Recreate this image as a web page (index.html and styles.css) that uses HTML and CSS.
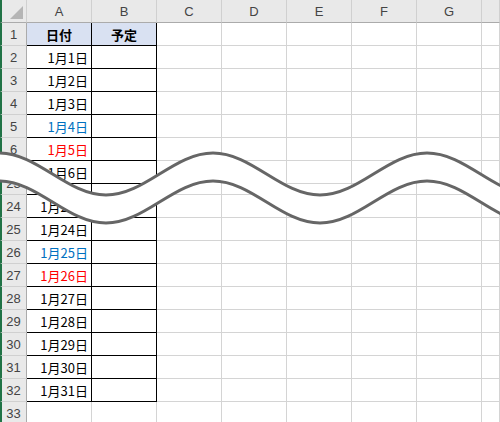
FILE: index.html
```html
<!DOCTYPE html>
<html lang="ja">
<head>
<meta charset="utf-8">
<link rel="stylesheet" href="styles.css">
</head>
<body>
<div class="sheet">
  <div class="part top">
    <div class="row hdrow">
      <div class="corner"><span class="tri"></span></div>
      <div class="ch">A</div><div class="ch">B</div><div class="ch">C</div><div class="ch">D</div><div class="ch">E</div><div class="ch">F</div><div class="ch">G</div><div class="ch"></div>
    </div>
    <div class="row"><div class="rh">1</div><div class="c t th">日付</div><div class="c t th">予定</div><div class="c"></div><div class="c"></div><div class="c"></div><div class="c"></div><div class="c"></div><div class="c"></div></div>
    <div class="row"><div class="rh">2</div><div class="c t r">1月1日</div><div class="c t"></div><div class="c"></div><div class="c"></div><div class="c"></div><div class="c"></div><div class="c"></div><div class="c"></div></div>
    <div class="row"><div class="rh">3</div><div class="c t r">1月2日</div><div class="c t"></div><div class="c"></div><div class="c"></div><div class="c"></div><div class="c"></div><div class="c"></div><div class="c"></div></div>
    <div class="row"><div class="rh">4</div><div class="c t r">1月3日</div><div class="c t"></div><div class="c"></div><div class="c"></div><div class="c"></div><div class="c"></div><div class="c"></div><div class="c"></div></div>
    <div class="row"><div class="rh">5</div><div class="c t r sat">1月4日</div><div class="c t"></div><div class="c"></div><div class="c"></div><div class="c"></div><div class="c"></div><div class="c"></div><div class="c"></div></div>
    <div class="row"><div class="rh">6</div><div class="c t r sun">1月5日</div><div class="c t"></div><div class="c"></div><div class="c"></div><div class="c"></div><div class="c"></div><div class="c"></div><div class="c"></div></div>
    <div class="row"><div class="rh">7</div><div class="c t r">1月6日</div><div class="c t"></div><div class="c"></div><div class="c"></div><div class="c"></div><div class="c"></div><div class="c"></div><div class="c"></div></div>
    <div class="row"><div class="rh">8</div><div class="c t r">1月7日</div><div class="c t"></div><div class="c"></div><div class="c"></div><div class="c"></div><div class="c"></div><div class="c"></div><div class="c"></div></div>
  </div>
  <div class="part bot">
    <div class="row"><div class="rh">23</div><div class="c t r">1月22日</div><div class="c t"></div><div class="c"></div><div class="c"></div><div class="c"></div><div class="c"></div><div class="c"></div><div class="c"></div></div>
    <div class="row"><div class="rh">24</div><div class="c t r">1月23日</div><div class="c t"></div><div class="c"></div><div class="c"></div><div class="c"></div><div class="c"></div><div class="c"></div><div class="c"></div></div>
    <div class="row"><div class="rh">25</div><div class="c t r">1月24日</div><div class="c t"></div><div class="c"></div><div class="c"></div><div class="c"></div><div class="c"></div><div class="c"></div><div class="c"></div></div>
    <div class="row"><div class="rh">26</div><div class="c t r sat">1月25日</div><div class="c t"></div><div class="c"></div><div class="c"></div><div class="c"></div><div class="c"></div><div class="c"></div><div class="c"></div></div>
    <div class="row"><div class="rh">27</div><div class="c t r sun">1月26日</div><div class="c t"></div><div class="c"></div><div class="c"></div><div class="c"></div><div class="c"></div><div class="c"></div><div class="c"></div></div>
    <div class="row"><div class="rh">28</div><div class="c t r">1月27日</div><div class="c t"></div><div class="c"></div><div class="c"></div><div class="c"></div><div class="c"></div><div class="c"></div><div class="c"></div></div>
    <div class="row"><div class="rh">29</div><div class="c t r">1月28日</div><div class="c t"></div><div class="c"></div><div class="c"></div><div class="c"></div><div class="c"></div><div class="c"></div><div class="c"></div></div>
    <div class="row"><div class="rh">30</div><div class="c t r">1月29日</div><div class="c t"></div><div class="c"></div><div class="c"></div><div class="c"></div><div class="c"></div><div class="c"></div><div class="c"></div></div>
    <div class="row"><div class="rh">31</div><div class="c t r">1月30日</div><div class="c t"></div><div class="c"></div><div class="c"></div><div class="c"></div><div class="c"></div><div class="c"></div><div class="c"></div></div>
    <div class="row"><div class="rh">32</div><div class="c t r">1月31日</div><div class="c t"></div><div class="c"></div><div class="c"></div><div class="c"></div><div class="c"></div><div class="c"></div><div class="c"></div></div>
    <div class="row"><div class="rh">33</div><div class="c"></div><div class="c"></div><div class="c"></div><div class="c"></div><div class="c"></div><div class="c"></div><div class="c"></div><div class="c"></div></div>
  </div>
  <svg class="wave" width="500" height="422" viewBox="0 0 500 422" aria-hidden="true">
    <path class="band" d="M-1,153 C38,153 67,195 106,195 C145,195 174,153 213,153 C252,153 281,195 320,195 C359,195 388,153 427,153 C466,153 495,195 534,195 L534,223 C495,223 466,181 427,181 C388,181 359,223 320,223 C281,223 252,181 213,181 C174,181 145,223 106,223 C67,223 38,181 -1,181 Z"/>
    <path class="edge" d="M-1,153 C38,153 67,195 106,195 C145,195 174,153 213,153 C252,153 281,195 320,195 C359,195 388,153 427,153 C466,153 495,195 534,195"/>
    <path class="edge" d="M-1,181 C38,181 67,223 106,223 C145,223 174,181 213,181 C252,181 281,223 320,223 C359,223 388,181 427,181 C466,181 495,223 534,223"/>
  </svg>
</div>
</body>
</html>
```
FILE: styles.css
```css
html, body {
  margin: 0;
  padding: 0;
  background: #fff;
  overflow: hidden;
}
body {
  width: 500px;
  height: 422px;
  font-family: "Noto Sans CJK JP", "Noto Sans", sans-serif;
  font-size: 13px;
  color: #000;
}
.sheet {
  position: relative;
  display: grid;
  width: 500px;
  height: 422px;
  overflow: hidden;
}
.part {
  grid-area: 1 / 1;
  background: #fff;
}
.top {
  align-self: start;
}
.bot {
  align-self: start;
  margin-top: 172px;
  clip-path: path('M-1,-5 C38,-5 67,37 106,37 C145,37 174,-5 213,-5 C252,-5 281,37 320,37 C359,37 388,-5 427,-5 C466,-5 495,37 534,37 L534,400 L-1,400 Z');
}
.row {
  display: grid;
  grid-template-columns: 27px repeat(7, 65px) 1fr;
  height: 23px;
}
.row > div {
  box-sizing: border-box;
  height: 23px;
}
.corner, .ch, .rh {
  background: #e9e9e9;
  color: #444;
  font-family: "Liberation Sans", "Noto Sans CJK JP", sans-serif;
  font-size: 13px;
}
.corner {
  position: relative;
  border-left: 2px solid #217346;
  border-right: 1px solid #d0d0d0;
  border-bottom: 1px solid #ababab;
}
.tri {
  position: absolute;
  right: 3px;
  bottom: 3px;
  width: 0;
  height: 0;
  border-left: 13px solid transparent;
  border-bottom: 13px solid #b5b5b5;
}
.ch {
  display: flex;
  align-items: center;
  justify-content: center;
  border-right: 1px solid #d0d0d0;
  border-bottom: 1px solid #ababab;
}
.rh {
  display: flex;
  align-items: center;
  justify-content: center;
  border-left: 2px solid #217346;
  border-right: 1px solid #ababab;
  border-bottom: 1px solid #d0d0d0;
  padding-right: 1px;
}
.c {
  border-right: 1px solid #d4d4d4;
  border-bottom: 1px solid #d4d4d4;
  display: flex;
  align-items: center;
  white-space: nowrap;
}
.c.t {
  border-right-color: #000;
  border-bottom-color: #000;
}
.c.th {
  background: #d9e1f2;
  justify-content: center;
  font-weight: bold;
}
.c.r {
  justify-content: flex-end;
  padding-right: 3px;
}
.sat { color: #0070c0; }
.sun { color: #ff0000; }
.wave {
  position: absolute;
  left: 0;
  top: 0;
  z-index: 2;
}
.band {
  fill: #fff;
  stroke: none;
}
.edge {
  fill: none;
  stroke: #666;
  stroke-width: 3;
}
```
